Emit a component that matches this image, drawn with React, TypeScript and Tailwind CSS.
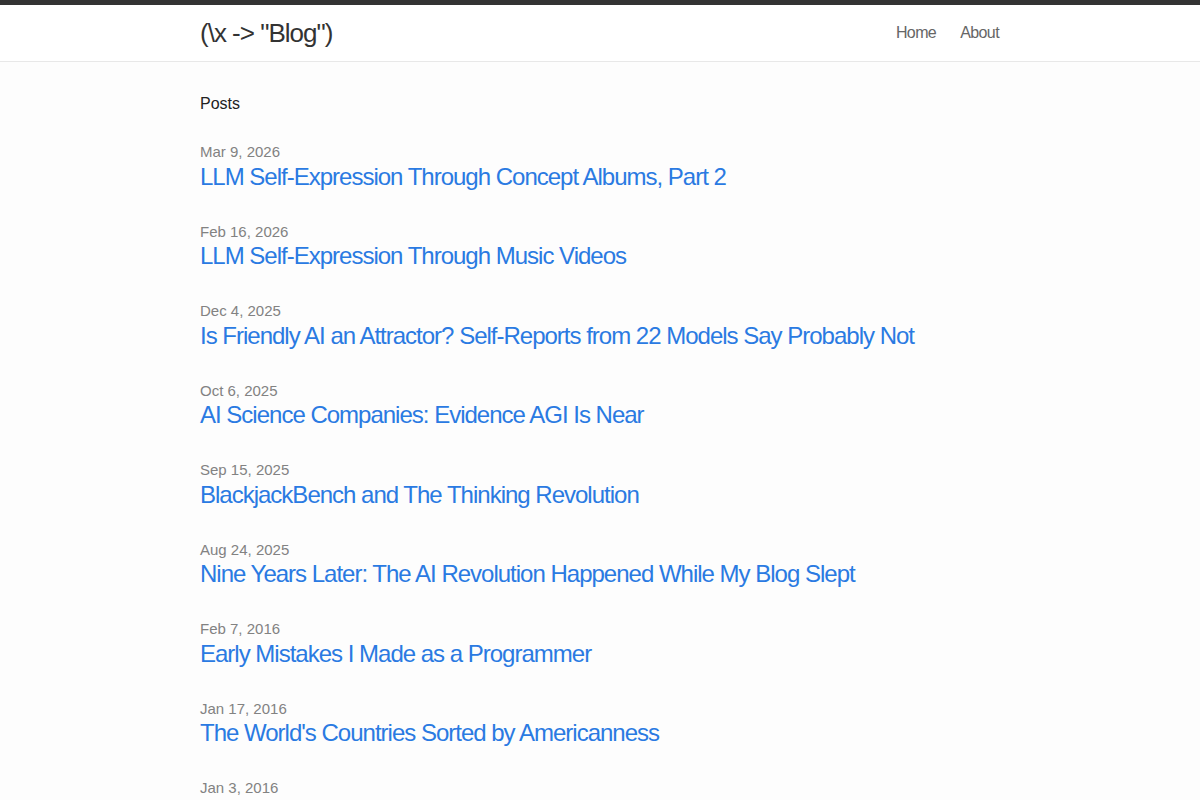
const posts = [
  { date: 'Mar 9, 2026', title: 'LLM Self-Expression Through Concept Albums, Part 2' },
  { date: 'Feb 16, 2026', title: 'LLM Self-Expression Through Music Videos' },
  { date: 'Dec 4, 2025', title: 'Is Friendly AI an Attractor? Self-Reports from 22 Models Say Probably Not' },
  { date: 'Oct 6, 2025', title: 'AI Science Companies: Evidence AGI Is Near' },
  { date: 'Sep 15, 2025', title: 'BlackjackBench and The Thinking Revolution' },
  { date: 'Aug 24, 2025', title: 'Nine Years Later: The AI Revolution Happened While My Blog Slept' },
  { date: 'Feb 7, 2016', title: 'Early Mistakes I Made as a Programmer' },
  { date: 'Jan 17, 2016', title: "The World's Countries Sorted by Americanness" },
  { date: 'Jan 3, 2016', title: 'Why I Started This Blog' },
];

export default function App() {
  return (
    <div className="min-h-screen bg-[#fdfdfd] font-['Liberation_Sans',Arial,sans-serif] text-[#111]">
      <header className="border-t-[5px] border-b border-t-[#333] border-b-[#e8e8e8] bg-white">
        <div className="mx-auto flex h-14 w-[800px] items-center justify-between">
          <a href="#" className="text-[26px] leading-[56px] tracking-[-1px] text-[#333]">
            (\x -&gt; "Blog")
          </a>
          <nav className="flex gap-6 pr-px text-base tracking-[-0.6px] text-[#666]">
            <a href="#">Home</a>
            <a href="#">About</a>
          </nav>
        </div>
      </header>

      <main className="mx-auto w-[800px] py-[30px]">
        <h2 className="text-base leading-6 text-[#222]">Posts</h2>
        <ul className="mt-[25px] flex flex-col gap-[31px]">
          {posts.map((p) => (
            <li key={p.date}>
              <div className="text-[15px] leading-[22.5px] text-[#828282]">{p.date}</div>
              <a href="#" className="block text-2xl leading-[26px] tracking-[-1px] text-[#2a7ae2]">
                {p.title}
              </a>
            </li>
          ))}
        </ul>
      </main>
    </div>
  );
}
